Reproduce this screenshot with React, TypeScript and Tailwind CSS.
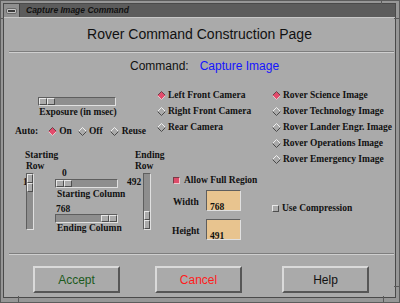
import React from "react";

const serif =
  "font-['Liberation_Serif',serif] font-bold text-[9.5px] leading-[11px] text-[#111] whitespace-nowrap";
const raised =
  "border border-t-[#e8e8e8] border-l-[#e8e8e8] border-b-[#4e4e4e] border-r-[#4e4e4e]";
const sunken =
  "border border-t-[#5e5e5e] border-l-[#5e5e5e] border-b-[#e0e0e0] border-r-[#e0e0e0]";

function Diamond({ on }: { on?: boolean }) {
  return (
    <svg width="9" height="9" viewBox="0 0 9 9" className="shrink-0">
      <polygon points="4.5,0.5 8.5,4.5 4.5,8.5 0.5,4.5" fill={on ? "#e24c6c" : "#aaaaaa"} />
      <polyline points="0.5,4.5 4.5,0.5 8.5,4.5" fill="none" stroke={on ? "#6a4048" : "#f0f0f0"} strokeWidth="1" />
      <polyline points="0.5,4.5 4.5,8.5 8.5,4.5" fill="none" stroke={on ? "#e8c8cc" : "#4a4a4a"} strokeWidth="1" />
    </svg>
  );
}

function Radio({ label, on, textMl = "ml-[2px]" }: { label: string; on?: boolean; textMl?: string }) {
  return (
    <div className="flex items-center h-[16px] pl-[2px]">
      <Diamond on={on} />
      <span className={`${serif} ${textMl}`}>{label}</span>
    </div>
  );
}

function HSlider({ w, right }: { w: string; right?: boolean }) {
  return (
    <div className={`${w} h-[9px] bg-[#8e8e8e] ${sunken} flex ${right ? "justify-end" : "justify-start"}`}>
      <div className="flex h-full">
        <div className={`w-[8px] h-full bg-[#ababab] ${raised}`} />
        <div className={`w-[8px] h-full bg-[#ababab] ${raised}`} />
      </div>
    </div>
  );
}

function VSlider({ bottom }: { bottom?: boolean }) {
  return (
    <div className={`w-[8px] h-[57px] bg-[#8e8e8e] ${sunken} flex flex-col ${bottom ? "justify-end" : "justify-start"}`}>
      <div className={`h-[9px] w-full bg-[#ababab] ${raised}`} />
      <div className={`h-[9px] w-full bg-[#ababab] ${raised}`} />
    </div>
  );
}

function Separator() {
  return <div className="ml-[5px] mr-[1px] h-[2px] border-t border-t-[#7e7e7e] border-b border-b-[#cfcfcf]" />;
}

function Button({ label, color, className }: { label: string; color: string; className?: string }) {
  return (
    <div
      className={`w-[87px] h-[27px] flex items-center justify-center bg-[#aaaaaa] border-2 border-t-[#dadada] border-l-[#dadada] border-b-[#565656] border-r-[#565656] font-['Liberation_Sans',Arial,sans-serif] text-[12px] ${color} ${className ?? ""}`}
    >
      {label}
    </div>
  );
}

export default function App() {
  return (
    <div className="relative w-[400px] h-[303px] bg-[#979797] border border-[#5c5c5c] pt-[2px] pl-[2px] pr-[3px] pb-[4px] flex flex-col overflow-hidden">
      {/* corner marks */}
      <div className="absolute left-[17px] bottom-0 w-px h-[6px] bg-[#5a5a5a]" />
      <div className="absolute left-[382px] bottom-0 w-px h-[6px] bg-[#5a5a5a]" />
      <div className="absolute left-[380px] top-0 w-px h-[3px] bg-[#5a5a5a]" />
      <div className="absolute right-0 top-[285px] h-px w-[5px] bg-[#5a5a5a]" />
      <div className="absolute right-0 top-[17px] h-px w-[5px] bg-[#5a5a5a]" />
      <div className="absolute left-0 top-[17px] h-px w-[3px] bg-[#5a5a5a]" />

      <div className="flex-1 flex flex-col border border-[#4a4a4a]">
        {/* title bar */}
        <div className="h-[13px] flex">
          <div className="w-[15px] h-full bg-[#8f8f8f] flex items-center justify-center">
            <div className="w-[11px] h-[6px] rounded-[2px] bg-[#c4c4c4] border border-[#6a6a6a] flex items-center justify-center">
              <div className="w-[7px] h-[2px] bg-[#3a3a3a]" />
            </div>
          </div>
          <div className="flex-1 h-full bg-[#5c5c5c] border-l border-l-[#444] flex items-center pl-[6px] font-['Liberation_Sans',Arial,sans-serif] italic font-bold text-[8.5px] text-[#111] whitespace-nowrap">
            Capture Image Command
          </div>
        </div>

        {/* body */}
        <div className="flex-1 flex flex-col bg-[#aaaaaa] border-t border-t-[#c8c8c8]">
          <div className="h-[33px] flex items-center justify-center font-['Liberation_Sans',Arial,sans-serif] text-[14px] text-[#111]">
            Rover Command Construction Page
          </div>
          <Separator />
          <div className="mt-[6px] h-[14px] flex items-center pl-[126px] font-['Liberation_Sans',Arial,sans-serif] text-[12px] leading-[14px]">
            <span className="text-[#111]">Command:</span>
            <span className="ml-[11px] text-[#1414ff]">Capture Image</span>
          </div>

          {/* main area */}
          <div className="mt-[14px] h-[166px] flex">
            {/* column A */}
            <div className="w-[151px] flex flex-col">
              <div className="mt-[10px] ml-[34px]">
                <HSlider w="w-[78px]" />
              </div>
              <div className={`${serif} ml-[34px] w-[80px] text-center mt-[1px]`}>Exposure (in msec)</div>
              <div className="mt-[7px] h-[12px] flex items-center pl-[11px]">
                <span className={serif}>Auto:</span>
                <span className="ml-[10px] flex items-center">
                  <Diamond on />
                  <span className={`${serif} ml-[2px]`}>On</span>
                </span>
                <span className="ml-[6px] flex items-center">
                  <Diamond />
                  <span className={`${serif} ml-[2px]`}>Off</span>
                </span>
                <span className="ml-[7px] flex items-center">
                  <Diamond />
                  <span className={`${serif} ml-[3px]`}>Reuse</span>
                </span>
              </div>

              {/* row / column block */}
              <div className="mt-[13px] flex">
                <div className="ml-[19px] w-[32px] flex flex-col">
                  <div className={`${serif} pl-[2px]`}>Starting</div>
                  <div className={`${serif} pl-[3px]`}>Row</div>
                  <div className="mt-[1px] flex">
                    <div className={`${serif} w-[3px] mt-[4px] overflow-visible`}>1</div>
                    <VSlider />
                  </div>
                </div>
                <div className="w-[63px] flex flex-col">
                  <div className={`${serif} leading-[10px] mt-[18px] pl-[7px]`}>0</div>
                  <HSlider w="w-[63px]" />
                  <div className={`${serif} mt-[1px] pl-[2px]`}>Starting Column</div>
                  <div className={`${serif} mt-[4px] pl-[1px]`}>768</div>
                  <div className="-mt-[1px]">
                    <HSlider w="w-[63px]" right />
                  </div>
                  <div className={`${serif} pl-[2px]`}>Ending Column</div>
                </div>
                <div className="ml-[9px] flex flex-col">
                  <div className={`${serif} pl-[8px]`}>Ending</div>
                  <div className={`${serif} pl-[8px]`}>Row</div>
                  <div className="mt-[1px] flex">
                    <div className={`${serif} w-[16px] mt-[4px]`}>492</div>
                    <VSlider bottom />
                  </div>
                </div>
              </div>
            </div>

            {/* column B */}
            <div className="w-[115px] flex flex-col">
              <Radio label="Left Front Camera" on />
              <Radio label="Right Front Camera" />
              <Radio label="Rear Camera" />
              <div className="mt-[40px] h-[11px] flex items-center pl-[18px]">
                <div className="w-[7px] h-[7px] bg-[#de4c6a] border border-t-[#7a3a46] border-l-[#7a3a46] border-b-[#eec6ce] border-r-[#eec6ce]" />
                <span className={`${serif} ml-[4px]`}>Allow Full Region</span>
              </div>
              <div className="mt-[4px] flex items-center pl-[18px]">
                <span className={`${serif} w-[33px] mt-[3px]`}>Width</span>
                <div className={`w-[35px] h-[21px] bg-[#e8c48f] ${sunken} pl-[3px] pt-[1px]`}>
                  <span className={serif}>768</span>
                </div>
              </div>
              <div className="mt-[8px] flex items-center pl-[17px]">
                <span className={`${serif} w-[34px] mt-[3px]`}>Height</span>
                <div className={`w-[35px] h-[21px] bg-[#e8c48f] ${sunken} pl-[3px] pt-[1px]`}>
                  <span className={serif}>491</span>
                </div>
              </div>
            </div>

            {/* column C */}
            <div className="flex-1 flex flex-col">
              <Radio label="Rover Science Image" on />
              <Radio label="Rover Technology Image" />
              <Radio label="Rover Lander Engr. Image" />
              <Radio label="Rover Operations Image" />
              <Radio label="Rover Emergency Image" />
              <div className="mt-[36px] h-[11px] flex items-center pl-[2px]">
                <div className={`w-[7px] h-[7px] bg-[#ababab] ${raised}`} />
                <span className={`${serif} ml-[3px]`}>Use Compression</span>
              </div>
            </div>
          </div>

          <Separator />

          <div className="mt-[11px] flex pl-[29px]">
            <Button label="Accept" color="text-[#1c5a1c]" />
            <Button label="Cancel" color="text-[#ff1c1c]" className="ml-[35px]" />
            <Button label="Help" color="text-[#111]" className="ml-[40px]" />
          </div>
        </div>
      </div>
    </div>
  );
}
